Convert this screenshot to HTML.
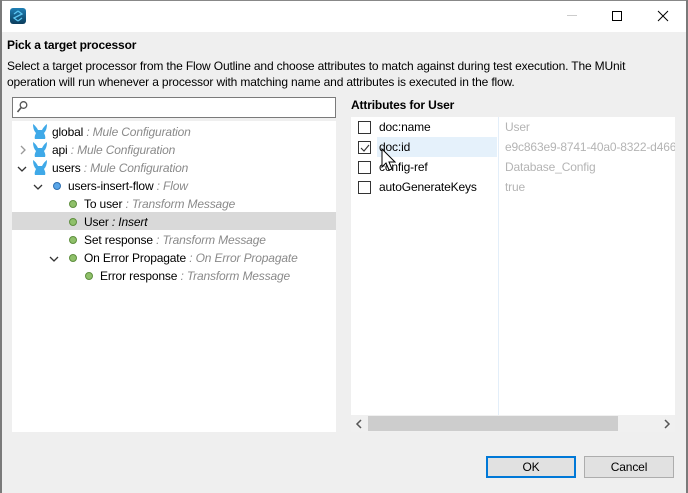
<!DOCTYPE html>
<html><head><meta charset="utf-8"><style>
*{margin:0;padding:0;box-sizing:border-box}
body{width:688px;height:493px;background:#efefef;font-family:"Liberation Sans",sans-serif;font-size:12px;color:#000;position:relative;overflow:hidden;letter-spacing:-0.15px}
.a{position:absolute;white-space:nowrap}
.g{color:#8a8a8a;font-style:italic}
.row{position:absolute;height:18px;line-height:20px;white-space:nowrap}
.dot{position:absolute;width:8px;height:8px;border-radius:50%;background:#8fc06a;border:1px solid #5e8f3e}
.cb{position:absolute;width:13px;height:13px;border:1px solid #333;background:#fff}
.r{position:absolute;line-height:21px;height:20px;white-space:nowrap}
.v{color:#b4b4b4}
.btn{position:absolute;height:22px;background:#e1e1e1;border:1px solid #adadad;text-align:center;line-height:21px}
</style></head><body>
<div class="a" style="left:0;top:0;width:688px;height:32px;background:#fff;border-top:1px solid #888"></div>
<div class="a" style="left:0;top:0;width:2px;height:493px;background:#7a7a7a"></div>
<div class="a" style="left:686px;top:0;width:2px;height:493px;background:#7a7a7a"></div>
<div class="a" style="left:10px;top:8px;width:16px;height:16px;border-radius:3px;background:linear-gradient(#1f7fb5,#0b3d5c)"><svg width="16" height="16"><path d="M8 3 L12 6 L8 8 L4 10 L8 13 M4 6 L8 3 M12 10 L8 13" stroke="#5cc6f2" fill="none" stroke-width="1.3"/></svg></div>
<div class="a" style="left:567px;top:15px;width:10px;height:1px;background:#ccc"></div>
<div class="a" style="left:612px;top:11px;width:10px;height:10px;border:1px solid #000"></div>
<svg class="a" style="left:657px;top:10px" width="12" height="12"><path d="M1 1L11 11M11 1L1 11" stroke="#000" stroke-width="1"/></svg>

<div class="a" style="left:7px;top:38px;font-weight:bold;font-size:12px">Pick a target processor</div>
<div class="a" style="left:7px;top:58px;line-height:16px;font-size:12px">Select a target processor from the Flow Outline and choose attributes to match against during test execution. The MUnit<br>operation will run whenever a processor with matching name and attributes is executed in the flow.</div>

<div class="a" style="left:12px;top:97px;width:324px;height:21px;background:#fff;border:1px solid #7a7a7a"></div>
<svg class="a" style="left:16px;top:100px" width="12" height="14"><circle cx="7.5" cy="5" r="3.3" stroke="#555" fill="none" stroke-width="1.3"/><path d="M5.2 7.5L1.5 12" stroke="#555" stroke-width="1.6"/></svg>

<div class="a" style="left:12px;top:121px;width:324px;height:311px;background:#fff"></div>
<div class="a" style="left:12px;top:212px;width:324px;height:18px;background:#d9d9d9"></div>

<svg class="a" style="left:32px;top:123px" width="16" height="80">
<g fill="#3fa9e8"><path d="M1 1 Q4 3 6 7 L10 7 Q12 3 15 1 Q15 7 12 10 Q14 14 13 16 L3 16 Q2 14 4 10 Q1 7 1 1Z"/>
<path transform="translate(0,18)" d="M1 1 Q4 3 6 7 L10 7 Q12 3 15 1 Q15 7 12 10 Q14 14 13 16 L3 16 Q2 14 4 10 Q1 7 1 1Z"/>
<path transform="translate(0,36)" d="M1 1 Q4 3 6 7 L10 7 Q12 3 15 1 Q15 7 12 10 Q14 14 13 16 L3 16 Q2 14 4 10 Q1 7 1 1Z"/></g></svg>
<svg class="a" style="left:18px;top:145px" width="10" height="10"><path d="M3 1L7 5L3 9" stroke="#999" fill="none" stroke-width="1.3"/></svg>
<svg class="a" style="left:17px;top:164px" width="10" height="10"><path d="M1 3L5 7L9 3" stroke="#333" fill="none" stroke-width="1.3"/></svg>
<svg class="a" style="left:33px;top:182px" width="10" height="10"><path d="M1 3L5 7L9 3" stroke="#333" fill="none" stroke-width="1.3"/></svg>
<svg class="a" style="left:49px;top:254px" width="10" height="10"><path d="M1 3L5 7L9 3" stroke="#333" fill="none" stroke-width="1.3"/></svg>

<div class="row" style="left:52px;top:122px">global <span class="g">: Mule Configuration</span></div>
<div class="row" style="left:52px;top:140px">api <span class="g">: Mule Configuration</span></div>
<div class="row" style="left:52px;top:158px">users <span class="g">: Mule Configuration</span></div>
<div class="dot" style="left:53px;top:182px;background:#5aa6e8;border-color:#2e6fb0"></div>
<div class="row" style="left:68px;top:176px">users-insert-flow <span class="g">: Flow</span></div>
<div class="dot" style="left:69px;top:200px"></div>
<div class="row" style="left:84px;top:194px">To user <span class="g">: Transform Message</span></div>
<div class="dot" style="left:69px;top:218px"></div>
<div class="row" style="left:84px;top:212px">User <span style="font-style:italic">: Insert</span></div>
<div class="dot" style="left:69px;top:236px"></div>
<div class="row" style="left:84px;top:230px">Set response <span class="g">: Transform Message</span></div>
<div class="dot" style="left:69px;top:254px"></div>
<div class="row" style="left:84px;top:248px">On Error Propagate <span class="g">: On Error Propagate</span></div>
<div class="dot" style="left:85px;top:272px"></div>
<div class="row" style="left:100px;top:266px">Error response <span class="g">: Transform Message</span></div>

<div class="a" style="left:351px;top:98px;font-weight:bold">Attributes for User</div>
<div class="a" style="left:351px;top:117px;width:324px;height:298px;background:#fff"></div>
<div class="a" style="left:498px;top:117px;width:1px;height:298px;background:#e3eef9"></div>
<div class="a" style="left:377px;top:137px;width:120px;height:20px;background:#e5f1fb"></div>
<div class="cb" style="left:358px;top:121px"></div>
<div class="cb" style="left:358px;top:141px"></div>
<svg class="a" style="left:360px;top:144px" width="10" height="8"><path d="M1 4L4 7L9 1" stroke="#333" fill="none" stroke-width="1.1"/></svg>
<div class="cb" style="left:358px;top:161px"></div>
<div class="cb" style="left:358px;top:181px"></div>
<div class="r" style="left:379px;top:117px">doc:name</div>
<div class="r" style="left:379px;top:137px">doc:id</div>
<div class="r" style="left:379px;top:157px">config-ref</div>
<div class="r" style="left:379px;top:177px">autoGenerateKeys</div>
<div class="r v" style="left:505px;top:117px">User</div>
<div class="r v" style="left:505px;top:137px;width:170px;overflow:hidden">e9c863e9-8741-40a0-8322-d466c</div>
<div class="r v" style="left:505px;top:157px">Database_Config</div>
<div class="r v" style="left:505px;top:177px">true</div>
<svg class="a" style="left:381px;top:148px" width="20" height="28"><path d="M1 1L1 19L5 15L8 22L11 21L8 14L14 14Z" fill="#fff" stroke="#000" stroke-width="1"/></svg>

<div class="a" style="left:351px;top:415px;width:324px;height:17px;background:#f0f0f0"></div>
<div class="a" style="left:368px;top:416px;width:250px;height:15px;background:#cdcdcd"></div>
<svg class="a" style="left:355px;top:419px" width="8" height="10"><path d="M6 1L2 5L6 9" stroke="#555" fill="none" stroke-width="1.5"/></svg>
<svg class="a" style="left:663px;top:419px" width="8" height="10"><path d="M2 1L6 5L2 9" stroke="#555" fill="none" stroke-width="1.5"/></svg>

<div class="btn" style="left:486px;top:456px;width:90px;border:2px solid #0078d7;line-height:19px">OK</div>
<div class="btn" style="left:584px;top:456px;width:90px">Cancel</div>
</body></html>
